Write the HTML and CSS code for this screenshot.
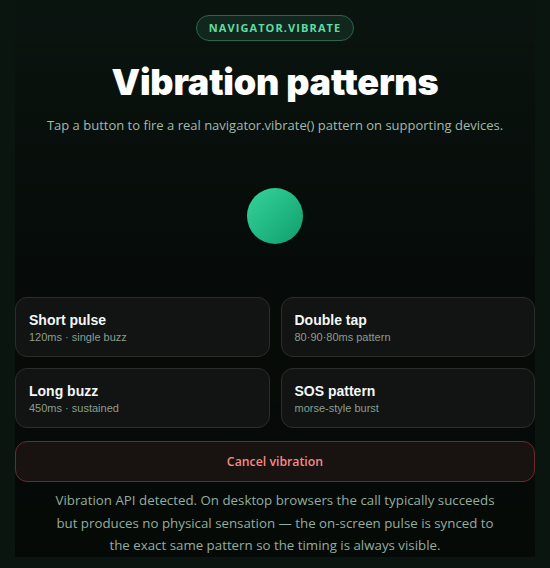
FILE: index.html
```html
<!DOCTYPE html>
<html lang="en">
<head>
<meta charset="utf-8">
<title>Vibration patterns</title>
<link rel="stylesheet" href="styles.css">
</head>
<body>
<main class="app">
  <header class="head">
    <span class="badge">NAVIGATOR.VIBRATE</span>
    <h1 class="title">Vibration patterns</h1>
    <p class="lead">Tap a button to fire a real navigator.vibrate() pattern on supporting devices.</p>
  </header>
  <div class="stage">
    <div class="pulse"></div>
  </div>
  <div class="grid">
    <button class="card"><span class="card-title">Short pulse</span><span class="card-sub">120ms · single buzz</span></button>
    <button class="card"><span class="card-title">Double tap</span><span class="card-sub">80·90·80ms pattern</span></button>
    <button class="card"><span class="card-title">Long buzz</span><span class="card-sub">450ms · sustained</span></button>
    <button class="card"><span class="card-title">SOS pattern</span><span class="card-sub">morse-style burst</span></button>
  </div>
  <button class="cancel">Cancel vibration</button>
  <p class="note">Vibration API detected. On desktop browsers the call typically succeeds but produces no physical sensation — the on-screen pulse is synced to the exact same pattern so the timing is always visible.</p>
</main>
</body>
</html>
```

FILE: styles.css
```css
html, body {
  margin: 0;
  padding: 0;
}
body {
  background: #0b1510;
  font-family: "Open Sans", "Noto Sans", sans-serif;
  color: #e8efe9;
  padding: 0 15px;
}
.app {
  max-width: 520px;
  margin: 0 auto;
  padding-top: 15px;
  background: linear-gradient(to bottom, rgba(0,0,0,0.05) 0%, rgba(0,0,0,0.45) 45%, rgba(0,0,0,0.55) 100%);
}
.head {
  display: flex;
  flex-direction: column;
  align-items: center;
  text-align: center;
}
.badge {
  display: inline-block;
  padding: 0 12px;
  height: 24px;
  line-height: 24px;
  border: 1px solid #2b6649;
  border-radius: 13px;
  background: #11271d;
  color: #5fdca3;
  font-size: 11px;
  font-weight: 700;
  letter-spacing: 1.1px;
}
.title {
  margin: 18px 0 0;
  font-family: "Inter", "Lato", sans-serif;
  font-weight: 900;
  font-size: 36px;
  line-height: 46px;
  letter-spacing: -0.2px;
  color: #ffffff;
}
.lead {
  margin: 10px 0 0;
  font-size: 13px;
  line-height: 20px;
  color: #a3b8ad;
}
.stage {
  height: 162px;
  display: flex;
  align-items: center;
  justify-content: center;
}
.pulse {
  width: 56px;
  height: 56px;
  border-radius: 50%;
  background: linear-gradient(135deg, #36d49a 0%, #0f9e6e 100%);
}
.grid {
  display: grid;
  grid-template-columns: 1fr 1fr;
  gap: 11px;
}
.card {
  display: flex;
  flex-direction: column;
  align-items: flex-start;
  justify-content: center;
  gap: 3px;
  height: 60px;
  padding: 0 13px;
  background: #111412;
  border: 1px solid #2a2e2b;
  border-radius: 12px;
  font-family: "Liberation Sans", Arial, sans-serif;
  text-align: left;
  cursor: pointer;
}
.card-title {
  font-size: 14px;
  font-weight: 700;
  color: #f4f7f5;
}
.card-sub {
  font-size: 11px;
  color: #8a9d91;
}
.cancel {
  display: block;
  width: 100%;
  height: 41px;
  margin-top: 13px;
  background: #181211;
  border: 1px solid #6a2b2b;
  border-radius: 12px;
  color: #f58a84;
  font-family: "Open Sans", "Noto Sans", sans-serif;
  font-size: 12.3px;
  font-weight: 600;
  cursor: pointer;
}
.note {
  margin: 7px auto 0;
  max-width: 450px;
  padding-bottom: 0;
  text-align: center;
  font-size: 13.3px;
  line-height: 22.5px;
  color: #93ad9f;
}
```
